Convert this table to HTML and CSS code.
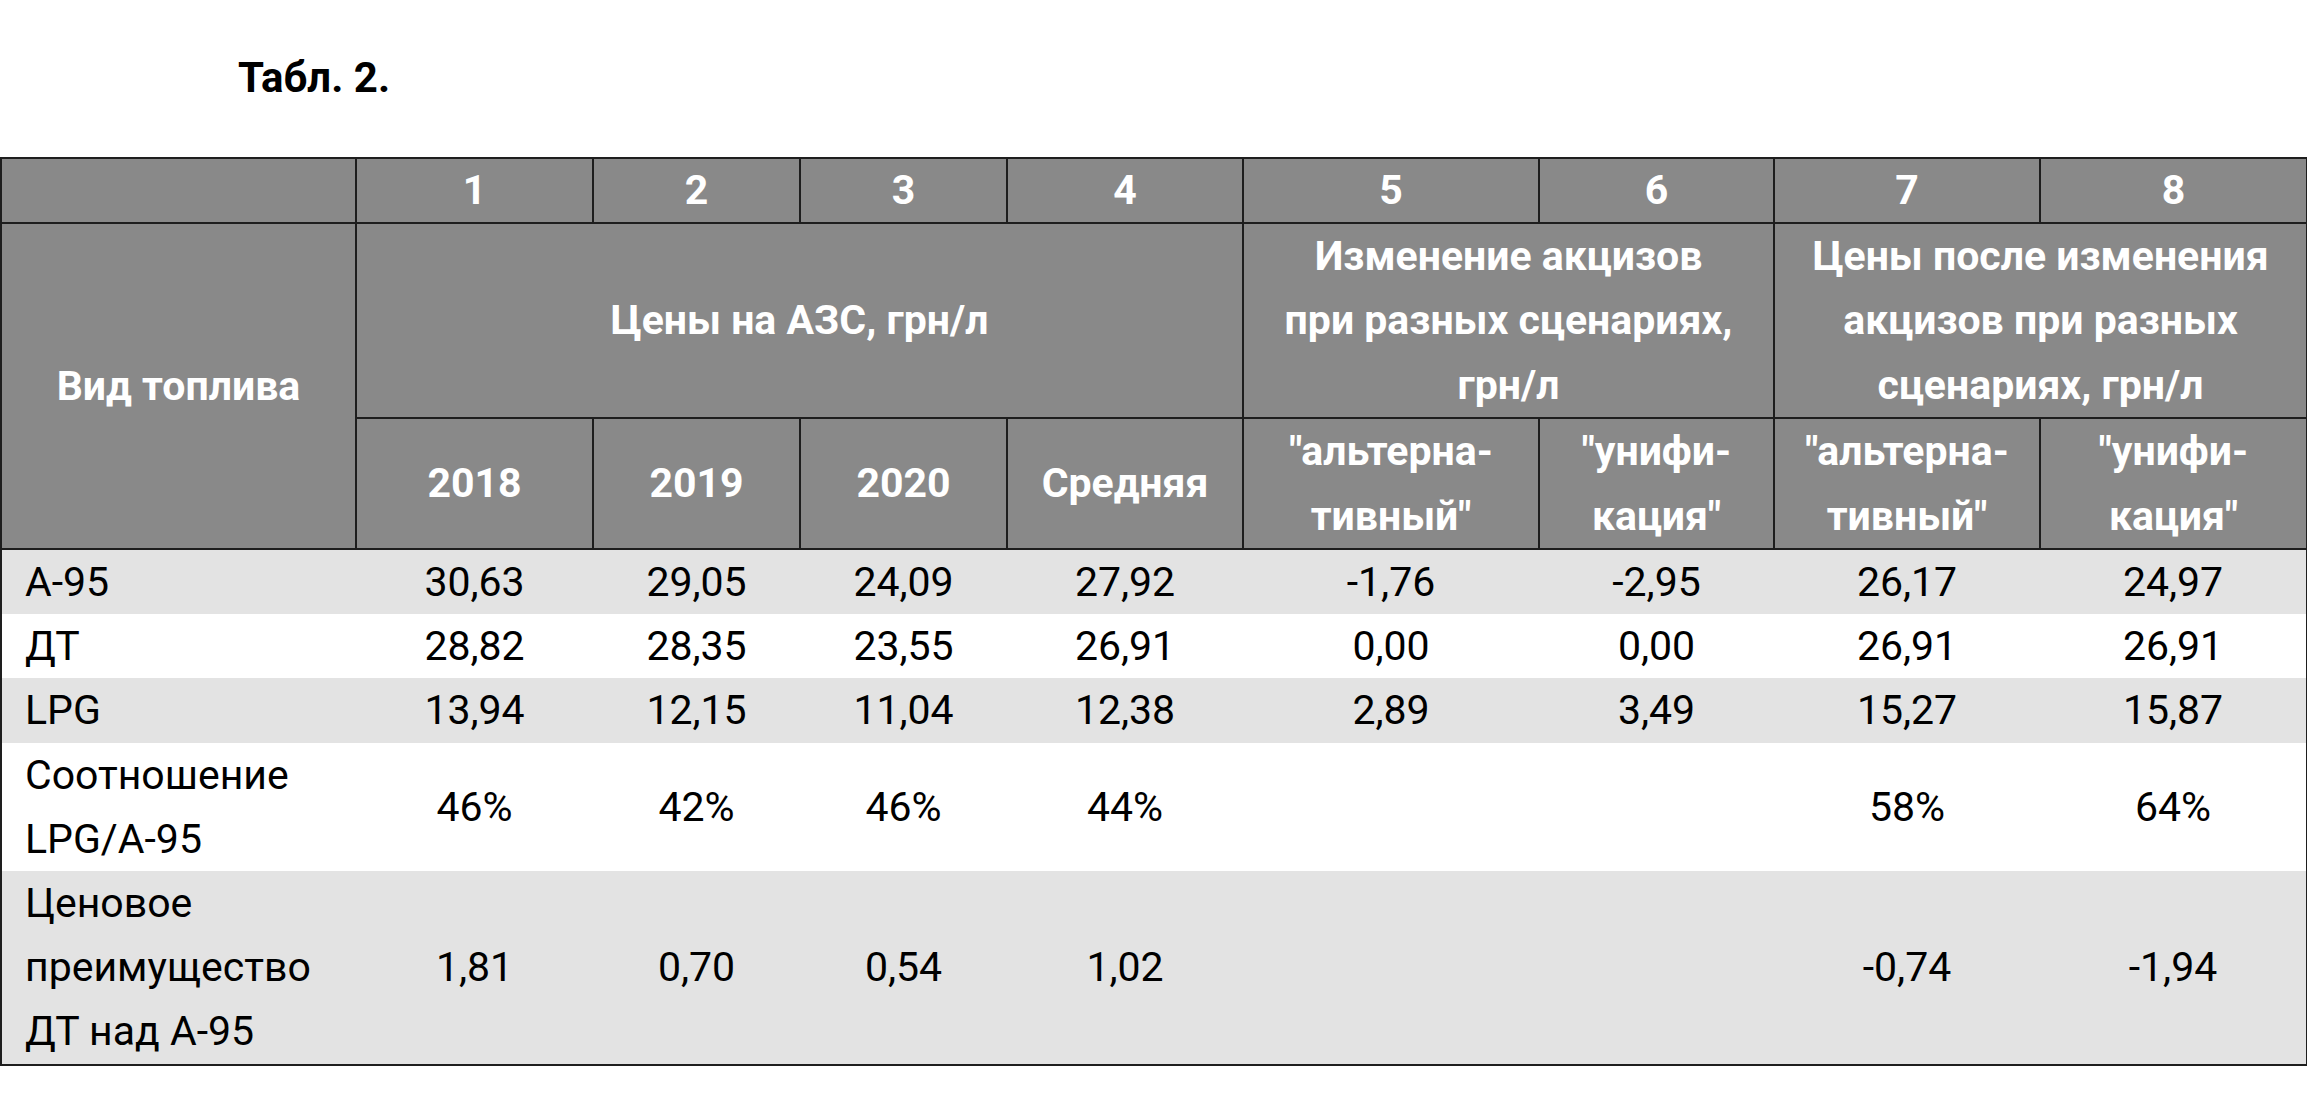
FILE: index.html
```html
<!DOCTYPE html>
<html lang="ru">
<head>
<meta charset="utf-8">
<title>Табл. 2.</title>
<link rel="stylesheet" href="styles.css">
</head>
<body>
<div class="caption">Табл. 2.</div>
<table class="fuel">
  <colgroup>
    <col class="c0"><col class="c1"><col class="c2"><col class="c3"><col class="c4">
    <col class="c5"><col class="c6"><col class="c7"><col class="c8">
  </colgroup>
  <thead>
    <tr class="nums">
      <th></th><th>1</th><th>2</th><th>3</th><th>4</th><th>5</th><th>6</th><th>7</th><th>8</th>
    </tr>
    <tr>
      <th rowspan="2">Вид топлива</th>
      <th colspan="4">Цены на АЗС, грн/л</th>
      <th colspan="2">Изменение акцизов<br>при разных сценариях,<br>грн/л</th>
      <th colspan="2">Цены после изменения<br>акцизов при разных<br>сценариях, грн/л</th>
    </tr>
    <tr>
      <th>2018</th><th>2019</th><th>2020</th><th>Средняя</th>
      <th>"альтерна-<br>тивный"</th><th>"унифи-<br>кация"</th>
      <th>"альтерна-<br>тивный"</th><th>"унифи-<br>кация"</th>
    </tr>
  </thead>
  <tbody>
    <tr class="shade">
      <td class="name">А-95</td><td>30,63</td><td>29,05</td><td>24,09</td><td>27,92</td><td>-1,76</td><td>-2,95</td><td>26,17</td><td>24,97</td>
    </tr>
    <tr>
      <td class="name">ДТ</td><td>28,82</td><td>28,35</td><td>23,55</td><td>26,91</td><td>0,00</td><td>0,00</td><td>26,91</td><td>26,91</td>
    </tr>
    <tr class="shade">
      <td class="name">LPG</td><td>13,94</td><td>12,15</td><td>11,04</td><td>12,38</td><td>2,89</td><td>3,49</td><td>15,27</td><td>15,87</td>
    </tr>
    <tr>
      <td class="name">Соотношение<br>LPG/А-95</td><td>46%</td><td>42%</td><td>46%</td><td>44%</td><td></td><td></td><td>58%</td><td>64%</td>
    </tr>
    <tr class="shade last">
      <td class="name">Ценовое<br>преимущество<br>ДТ над А-95</td><td>1,81</td><td>0,70</td><td>0,54</td><td>1,02</td><td></td><td></td><td>-0,74</td><td>-1,94</td>
    </tr>
  </tbody>
</table>
</body>
</html>
```
FILE: styles.css
```css
html, body {
  margin: 0;
  padding: 0;
  background: #ffffff;
}

body {
  font-family: Roboto, "Noto Sans", "Liberation Sans", sans-serif;
  color: #000;
}

.caption {
  box-sizing: border-box;
  height: 157px;
  padding: 53px 0 0 238px;
  font-size: 42px;
  font-weight: 700;
  line-height: 50px;
}

.fuel {
  border-collapse: collapse;
  table-layout: fixed;
  width: 2306px;
  font-size: 41px;
}

.c0 { width: 355px; }
.c1 { width: 237px; }
.c2 { width: 207px; }
.c3 { width: 207px; }
.c4 { width: 236px; }
.c5 { width: 296px; }
.c6 { width: 235px; }
.c7 { width: 266px; }
.c8 { width: 267px; }

.fuel th {
  background: #898989;
  color: #ffffff;
  font-weight: 700;
  line-height: 64.4px;
  padding: 0;
  border: 2px solid #1e1e1e;
  text-align: center;
  vertical-align: middle;
}

.fuel tr.nums th {
  line-height: 63px;
}

.fuel td {
  line-height: 64.2px;
  padding: 0;
  text-align: center;
  vertical-align: middle;
  border: none;
}

.fuel tbody tr.shade td {
  background: #e3e3e3;
}

.fuel td.name {
  text-align: left;
  padding-left: 23px;
  border-left: 2px solid #1e1e1e;
}

.fuel td:last-child {
  border-right: 2px solid #1e1e1e;
}

.fuel tr.last td {
  border-bottom: 2px solid #1e1e1e;
}
```
